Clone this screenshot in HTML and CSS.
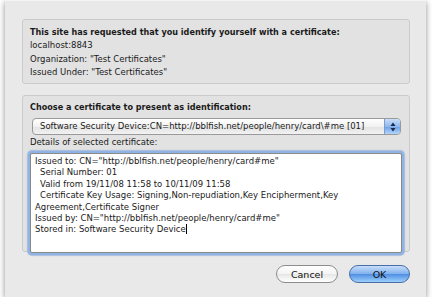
FILE: index.html
```html
<!DOCTYPE html>
<html lang="en">
<head>
    <meta charset="UTF-8">
    <title>Client Certificate</title>
    <link rel="stylesheet" href="styles.css">
</head>
<body>
    <div class="window">
        <div class="group site-info">
            <p class="heading">This site has requested that you identify yourself with a certificate:</p>
            <p>localhost:8843</p>
            <p>Organization: "Test Certificates"</p>
            <p>Issued Under: "Test Certificates"</p>
        </div>

        <div class="group chooser">
            <p class="heading">Choose a certificate to present as identification:</p>
            <div class="popup">
                <span class="popup-label">Software Security Device:CN=http://bblfish.net/people/henry/card\#me [01]</span>
                <span class="stepper">
                    <svg width="6" height="10" viewBox="0 0 6 10">
                        <path d="M3 0.5 L5.5 4 L0.5 4 Z" fill="#1a2a4a"/>
                        <path d="M3 9.5 L5.5 6 L0.5 6 Z" fill="#1a2a4a"/>
                    </svg>
                </span>
            </div>
            <p class="caption">Details of selected certificate:</p>
            <div class="details">
                <p>Issued to: CN="http://bblfish.net/people/henry/card#me"</p>
                <p class="indent">Serial Number: 01</p>
                <p class="indent">Valid from 19/11/08 11:58 to 10/11/09 11:58</p>
                <p class="indent">Certificate Key Usage: Signing,Non-repudiation,Key Encipherment,Key Agreement,Certificate Signer</p>
                <p>Issued by: CN="http://bblfish.net/people/henry/card#me"</p>
                <p>Stored in: Software Security Device<span class="caret"></span></p>
            </div>
        </div>

        <div class="buttons">
            <button class="btn">Cancel</button>
            <button class="btn default">OK</button>
        </div>
    </div>
</body>
</html>
```

FILE: styles.css
```css
body {
    margin: 0;
    background-color: #ffffff;
    font-family: "DejaVu Sans", "Liberation Sans", sans-serif;
    font-size: 8.5px;
    color: #1a1a1a;
}
p {
    margin: 0;
}
.window {
    margin-left: 5px;
    width: 421px;
    height: 297px;
    box-sizing: border-box;
    padding: 18px 16px 0 17px;
    background-color: #e9e9e9;
    border-top: 1px solid #f4f4f4;
    box-shadow: 0 2px 6px rgba(0, 0, 0, 0.45);
}
.group {
    background-color: #e2e2e2;
    border: 1px solid #cbcbcb;
    border-radius: 3px;
}
.site-info {
    height: 65px;
    box-sizing: border-box;
    padding: 6px 7px 0;
    line-height: 13.4px;
}
.heading {
    font-weight: bold;
    font-size: 8.1px;
}
.chooser {
    margin-top: 11px;
    height: 157px;
    box-sizing: border-box;
    padding: 5px 7px 0;
    line-height: 13px;
}
.popup {
    display: flex;
    align-items: center;
    margin: 4px 1px 0 2px;
    height: 15px;
    border: 1px solid #9a9a9a;
    border-radius: 4px;
    background: linear-gradient(#ffffff, #f1f1f1 50%, #e2e2e2 51%, #f2f2f2);
    overflow: hidden;
}
.popup-label {
    flex: 1;
    padding-left: 7px;
    white-space: nowrap;
    overflow: hidden;
}
.stepper {
    display: flex;
    align-items: center;
    justify-content: center;
    width: 15px;
    height: 100%;
    border-left: 1px solid #7f9ccd;
    background: linear-gradient(#c9def8, #8fb8ee 50%, #6a9fe6 51%, #b4d6fa);
}
.caption {
    margin-top: 1px;
}
.details {
    margin-top: 4px;
    height: 100px;
    box-sizing: border-box;
    padding: 2px 5px 0 4px;
    background-color: #ffffff;
    border: 1px solid #8a8a8a;
    border-radius: 2px;
    box-shadow: 0 0 0 2px #8fb3e4, 0 0 1px 3px rgba(110, 150, 215, 0.5);
    line-height: 11.4px;
}
.details .indent {
    text-indent: 5px;
}
.caret {
    display: inline-block;
    width: 1px;
    height: 10px;
    vertical-align: -2px;
    background-color: #000;
}
.buttons {
    display: flex;
    justify-content: flex-end;
    gap: 11px;
    margin-top: 13px;
}
.btn {
    width: 62px;
    height: 18px;
    padding: 0;
    font-family: inherit;
    font-size: 9.5px;
    color: #111;
    border: 1px solid #8c8c8c;
    border-radius: 9px;
    background: linear-gradient(#ffffff, #f3f3f3 50%, #e6e6e6 51%, #ffffff);
}
.default {
    width: 61px;
    border-color: #4a6ea6;
    background: linear-gradient(#c8defa, #7fb0ee 50%, #4f8ee3 51%, #9cd0fb);
}
```
